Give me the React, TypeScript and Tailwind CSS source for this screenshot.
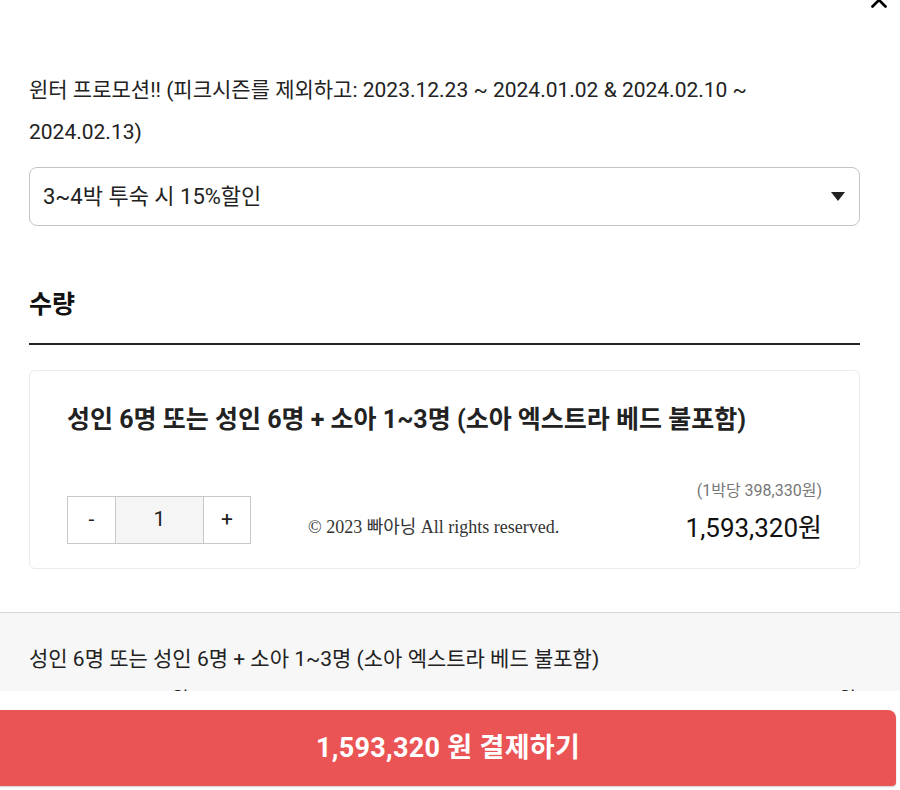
import { X } from "lucide-react";

const font = { fontFamily: 'Roboto, "Noto Sans CJK KR", sans-serif' };

export default function App() {
  return (
    <div
      className="relative h-[790px] w-[900px] overflow-hidden bg-white text-[#222]"
      style={font}
    >
      {/* close button, cut off by the top edge */}
      <X className="absolute -top-[13px] right-[8px] h-[26px] w-[26px] text-black" strokeWidth={2.5} />

      <div className="px-[29px] pr-[40px] pt-[69px]">
        <p className="max-w-[790px] text-[21px] leading-[42px] text-[#222]">
          윈터 프로모션!! (피크시즌를 제외하고: 2023.12.23 ~ 2024.01.02 &amp; 2024.02.10 ~ 2024.02.13)
        </p>

        <div className="mt-[14px] flex h-[59px] items-center justify-between rounded-[8px] border border-[#c4c4c4] pl-[13px] pr-[14px]">
          <span className="text-[22px] text-[#222]">3~4박 투숙 시 15%할인</span>
          <svg width="14" height="9" viewBox="0 0 14 9">
            <path d="M0 0h14L7 9z" fill="#222" />
          </svg>
        </div>

        <h2 className="mt-[62px] text-[25px] font-bold leading-[34px] text-[#111]">수량</h2>
        <div className="mt-[21px] h-[2px] bg-[#222]" />

        <div className="mt-[25px] rounded-[6px] border border-[#ebebeb] px-[37px] pb-[24px] pt-[34px]">
          <p className="text-[25px] font-bold leading-[30px] text-[#222]">
            성인 6명 또는 성인 6명 + 소아 1~3명 (소아 엑스트라 베드 불포함)
          </p>

          <div className="mt-[46px] flex items-end justify-between">
            <div className="flex items-end">
              <div className="flex h-[48px] border border-[#c8c8c8] text-[21px] text-[#222]">
                <button className="flex w-[47px] items-center justify-center bg-white">-</button>
                <div className="flex w-[89px] items-center justify-center border-x border-[#c8c8c8] bg-[#f5f5f5]">
                  1
                </div>
                <button className="flex w-[46px] items-center justify-center bg-white">+</button>
              </div>
              <span
                className="mb-[3px] ml-[57px] text-[18px] text-[#333]"
                style={{ fontFamily: '"Liberation Serif", "Noto Sans CJK KR", serif' }}
              >
                © 2023 빠아닝 All rights reserved.
              </span>
            </div>

            <div className="flex flex-col items-end">
              <span className="text-[16px] leading-[20px] text-[#777]">(1박당 398,330원)</span>
              <span className="mt-[11px] text-[26px] leading-[32px] text-[#111]">1,593,320원</span>
            </div>
          </div>
        </div>
      </div>

      <div className="mt-[43px] h-[79px] overflow-hidden border-t border-[#d6d6d6] bg-[#f7f7f7] px-[29px] pt-[33px]">
        <p className="text-[21px] leading-[26px] text-[#222]">
          성인 6명 또는 성인 6명 + 소아 1~3명 (소아 엑스트라 베드 불포함)
        </p>
        <div className="mt-[14px] flex justify-between pl-[60px] pr-[15px] text-[19px] text-[#222]">
          <span>1,593,320원</span>
          <span>1,593,320원</span>
        </div>
      </div>

      <div className="mt-[19px] flex h-[76px] w-[896px] items-center justify-center rounded-tr-[8px] rounded-br-[4px] bg-[#ea5455] shadow-[0_1px_2px_rgba(0,0,0,0.2)]">
        <span className="text-[27px] font-bold tracking-[0.3px] text-white">1,593,320 원 결제하기</span>
      </div>
    </div>
  );
}
